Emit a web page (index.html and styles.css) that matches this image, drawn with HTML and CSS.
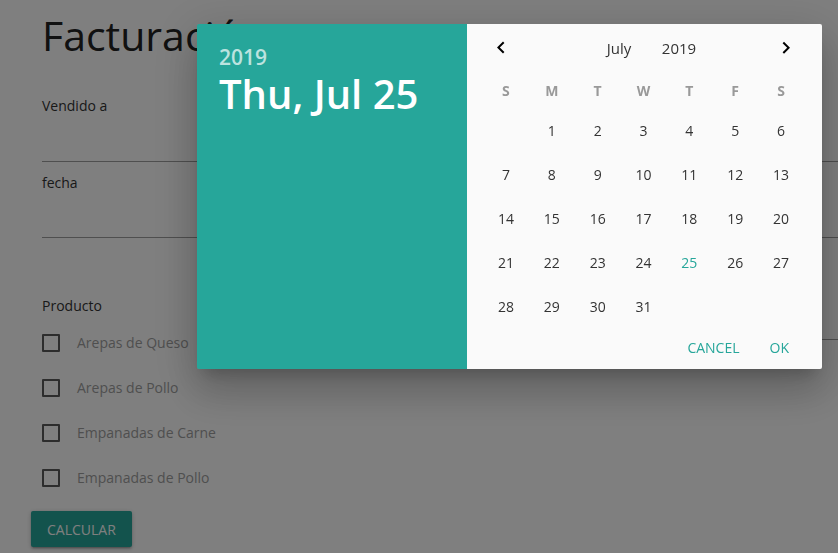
FILE: index.html
```html
<!DOCTYPE html>
<html lang="es">
<head>
<meta charset="utf-8">
<title>Facturación</title>
<link rel="stylesheet" href="styles.css">
</head>
<body>
<main class="page">
  <h1 class="title">Facturación</h1>

  <div class="field field-first">
    <label class="field-label">Vendido a</label>
    <div class="field-input"></div>
  </div>

  <div class="field field-second">
    <label class="field-label">fecha</label>
    <div class="field-input field-input-short"></div>
  </div>

  <section class="products">
    <div class="products-list">
      <div class="field-label">Producto</div>
      <ul class="checks">
        <li class="check"><span class="box"></span><span class="check-text">Arepas de Queso</span></li>
        <li class="check"><span class="box"></span><span class="check-text">Arepas de Pollo</span></li>
        <li class="check"><span class="box"></span><span class="check-text">Empanadas de Carne</span></li>
        <li class="check"><span class="box"></span><span class="check-text">Empanadas de Pollo</span></li>
      </ul>
    </div>
    <div class="products-side">
      <div class="side-input"></div>
    </div>
  </section>

  <button class="btn">Calcular</button>
</main>

<div class="overlay"></div>

<div class="modal">
  <div class="date-display">
    <div class="year-text">2019</div>
    <div class="date-text">Thu, Jul 25</div>
  </div>
  <div class="calendar">
    <div class="controls">
      <button class="nav-btn" aria-label="Mes anterior">
        <svg width="24" height="24" viewBox="0 0 24 24"><path d="M15.41 16.09l-4.58-4.59 4.58-4.59L14 5.5l-6 6 6 6z"/></svg>
      </button>
      <div class="selects">
        <span class="sel-month">July</span>
        <span class="sel-year">2019</span>
      </div>
      <button class="nav-btn" aria-label="Mes siguiente">
        <svg width="24" height="24" viewBox="0 0 24 24"><path d="M8.59 16.34l4.58-4.59-4.58-4.59L10 5.75l6 6-6 6z"/></svg>
      </button>
    </div>
    <div class="weekdays">
      <span>S</span><span>M</span><span>T</span><span>W</span><span>T</span><span>F</span><span>S</span>
    </div>
    <div class="days">
      <span></span><span>1</span><span>2</span><span>3</span><span>4</span><span>5</span><span>6</span>
      <span>7</span><span>8</span><span>9</span><span>10</span><span>11</span><span>12</span><span>13</span>
      <span>14</span><span>15</span><span>16</span><span>17</span><span>18</span><span>19</span><span>20</span>
      <span>21</span><span>22</span><span>23</span><span>24</span><span class="selected">25</span><span>26</span><span>27</span>
      <span>28</span><span>29</span><span>30</span><span>31</span>
    </div>
    <div class="footer">
      <button class="flat-btn">Cancel</button>
      <button class="flat-btn">Ok</button>
    </div>
  </div>
</div>
</body>
</html>
```
FILE: styles.css
```css
* { box-sizing: border-box; }

html, body {
  margin: 0;
  padding: 0;
  background: #ffffff;
  width: 838px;
  height: 553px;
  overflow: hidden;
  font-family: "Open Sans", "Noto Sans", sans-serif;
  color: #333333;
}

.page {
  padding-left: 42px;
}

.title {
  margin: 0;
  padding-top: 10px;
  font-size: 41px;
  line-height: 50px;
  font-weight: 400;
  color: #222222;
  white-space: nowrap;
}

.field-label {
  display: block;
  font-size: 14px;
  line-height: 20px;
  color: #333333;
}

.field-first { margin-top: 36px; }
.field-second { margin-top: 11px; }

.field-input {
  height: 46px;
  border-bottom: 1px solid #9e9e9e;
}

.field-input-short { height: 45px; }

.products {
  margin-top: 58px;
  display: flex;
}

.products-list {
  flex: 0 0 auto;
}

.products-side {
  margin-left: auto;
  width: 360px;
}

.side-input {
  height: 44px;
  border-bottom: 1px solid #9e9e9e;
}

.checks {
  list-style: none;
  margin: 18px 0 0;
  padding: 0;
  display: flex;
  flex-direction: column;
  gap: 27px;
}

.check {
  display: flex;
  align-items: center;
  height: 18px;
}

.box {
  width: 18px;
  height: 18px;
  border: 2px solid #5a5a5a;
  border-radius: 1px;
  flex: 0 0 auto;
}

.check-text {
  margin-left: 17px;
  font-size: 14px;
  line-height: 18px;
  color: #9e9e9e;
}

.btn {
  display: block;
  margin: 24px 0 0 -11px;
  height: 36px;
  padding: 0 16px;
  border: none;
  border-radius: 2px;
  background: #26a69a;
  color: #ffffff;
  font-family: inherit;
  font-size: 14px;
  text-transform: uppercase;
  box-shadow: 0 2px 2px 0 rgba(0,0,0,.14), 0 3px 1px -2px rgba(0,0,0,.12), 0 1px 5px 0 rgba(0,0,0,.2);
}

.overlay {
  position: fixed;
  inset: 0;
  background: rgba(0, 0, 0, 0.5);
}

.modal {
  position: fixed;
  left: 197px;
  top: 24px;
  width: 625px;
  height: 345px;
  display: flex;
  border-radius: 2px;
  overflow: hidden;
  box-shadow: 0 24px 38px 3px rgba(0,0,0,.14), 0 9px 46px 8px rgba(0,0,0,.12), 0 11px 15px -7px rgba(0,0,0,.2);
}

.date-display {
  flex: 0 0 270px;
  background: #26a69a;
  color: #ffffff;
  padding: 21px 22px;
}

.year-text {
  font-size: 21px;
  line-height: 24px;
  font-weight: 600;
  color: rgba(255, 255, 255, 0.7);
  margin-bottom: 1px;
}

.date-text {
  font-size: 40px;
  line-height: 47px;
  font-weight: 600;
  white-space: nowrap;
}

.calendar {
  flex: 0 0 355px;
  background: #fafafa;
  padding: 0 18px 0 16px;
  display: flex;
  flex-direction: column;
}

.controls {
  height: 48px;
  display: flex;
  align-items: center;
}

.nav-btn {
  width: 36px;
  height: 48px;
  padding: 0;
  border: none;
  background: transparent;
  display: flex;
  align-items: center;
  justify-content: center;
}

.nav-btn svg { fill: #000000; }

.selects {
  flex: 1;
  display: flex;
  justify-content: center;
  padding-right: 9px;
  font-size: 15px;
  color: #333333;
}

.sel-month { width: 80px; text-align: center; }
.sel-year { width: 40px; text-align: center; }

.weekdays,
.days {
  display: grid;
  grid-template-columns: repeat(7, 1fr);
  text-align: center;
}

.weekdays {
  height: 37px;
  line-height: 37px;
  font-size: 14px;
  font-weight: 700;
  color: #999999;
}

.days {
  grid-auto-rows: 44px;
  line-height: 44px;
  font-size: 14px;
  color: #333333;
  height: 220px;
}

.days .selected { color: #26a69a; }

.footer {
  height: 40px;
  display: flex;
  justify-content: flex-end;
  align-items: flex-start;
}

.flat-btn {
  height: 36px;
  padding: 0 15px;
  border: none;
  background: transparent;
  font-family: inherit;
  font-size: 14px;
  text-transform: uppercase;
  color: #26a69a;
}
```
